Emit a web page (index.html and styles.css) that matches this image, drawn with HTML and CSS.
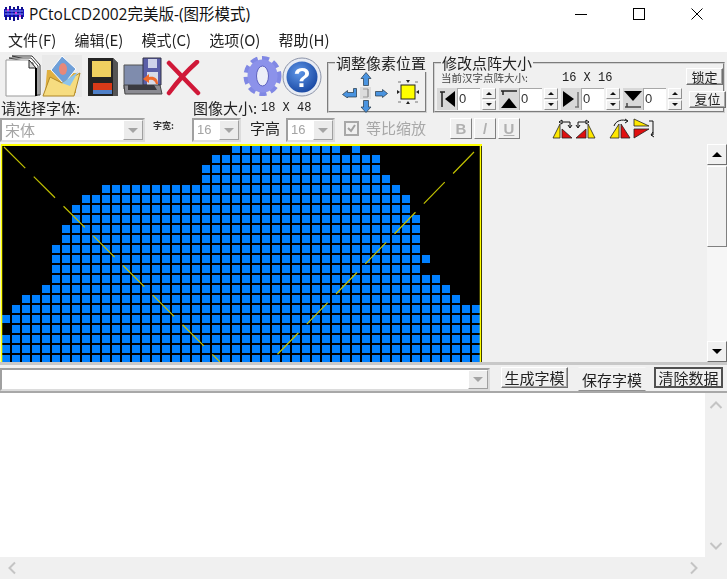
FILE: index.html
```html
<!DOCTYPE html>
<html lang="zh-CN">
<head>
<meta charset="utf-8">
<title>PCtoLCD2002</title>
<link rel="stylesheet" href="styles.css">
</head>
<body>
<div class="app">
  <header class="titlebar">
    <svg class="app-icon" width="20" height="16" viewBox="0 0 20 16">
      <rect x="0" y="3" width="20" height="8" fill="#1a1ad0"/>
      <path d="M1 1h2v13h-2zM5 0h2v14h-2zM9 1h2v14h-2zM13 0h2v14h-2zM17 1h2v12h-2z" fill="#10108c"/>
      <path d="M1 5h18M1 8h18" stroke="#8f9cff" stroke-width="1"/>
      <path d="M3 3h2v2h-2zM11 6h2v2h-2zM15 9h2v2h-2z" fill="#e040e0"/>
    </svg>
    <span class="title-text">PCtoLCD2002完美版-(图形模式)</span>
    <div class="win-controls">
      <svg width="12" height="12" viewBox="0 0 12 12"><path d="M0 6.500h12" stroke="#000"/></svg>
      <svg width="12" height="12" viewBox="0 0 12 12"><rect x=".5" y=".5" width="11" height="11" fill="none" stroke="#000"/></svg>
      <svg width="12" height="12" viewBox="0 0 12 12"><path d="M.5.5l11 11M11.500.5l-11 11" stroke="#000"/></svg>
    </div>
  </header>

  <nav class="menubar">
    <span>文件(F)</span><span>编辑(E)</span><span>模式(C)</span><span>选项(O)</span><span>帮助(H)</span>
  </nav>

  <section class="toolbar">
    <div class="toolbar-top">
      <div class="tool-left">
        <div class="icons">
          <svg class="ic-new" width="37" height="42" viewBox="0 0 37 42">
            <path d="M7 1h20l8 9v30h-6V6z" fill="#fff" stroke="#333"/>
            <path d="M4 3h22l7 8v29h-5V8z" fill="#fff" stroke="#444"/>
            <path d="M1 5h23l7 8v28H1z" fill="#fff" stroke="#999"/>
            <path d="M24 5l7 8h-7z" fill="#ddd" stroke="#222"/>
            <path d="M31 13v28" stroke="#000" stroke-width="2"/>
          </svg>
          <svg class="ic-open" width="40" height="42" viewBox="0 0 40 42">
            <rect x="0" y="0" width="40" height="42" fill="#e9e9e9"/>
            <path d="M5 15h10l3 3h16v20H3z" fill="#e0b040"/>
            <path d="M20 1l14 13-12 15-13-14z" fill="#6f9fd8" stroke="#fff"/>
            <ellipse cx="21" cy="14" rx="4" ry="6" fill="#e88878"/>
            <path d="M8 22l12 6 18-10-6 23H1z" fill="#f6dc80" stroke="#b08828"/>
            <path d="M20 28l16-11-8 14z" fill="#8cc4ec"/>
          </svg>
          <svg class="ic-save" width="32" height="40" viewBox="0 0 32 40">
            <path d="M1 1h25l5 5v33H1z" fill="#242424"/>
            <path d="M26 1l5 5v33h-5z" fill="#555"/>
            <rect x="5" y="4" width="19" height="16" fill="#f0d060"/>
            <rect x="6" y="26" width="19" height="7" fill="#d83a18"/>
            <rect x="6" y="33" width="19" height="4" fill="#4f80c8"/>
          </svg>
          <svg class="ic-saveas" width="40" height="40" viewBox="0 0 40 40">
            <path d="M1 8h20v24H1z" fill="#7f8cad" stroke="#555"/>
            <path d="M20 1h18v27H20z" fill="#5b5fa8" stroke="#334"/>
            <rect x="25" y="2" width="9" height="9" fill="#cfd3ea"/>
            <rect x="24" y="15" width="11" height="13" fill="#d8dbe8"/>
            <path d="M1 28h36l2 9H2z" fill="#8b8b92" stroke="#444"/>
            <path d="M5 28h26l3 5H5z" fill="#3a3a40"/>
            <path d="M35 27c0-6-4-8-9-7v-3l-6 5 6 4v-3c4-1 6 1 7 4z" fill="#f06a2c"/>
          </svg>
          <svg class="ic-del" width="36" height="36" viewBox="0 0 36 36">
            <path d="M3 3l29 30M31 2C22 10 11 22 3 33" fill="none" stroke="#d01838" stroke-width="4.500" stroke-linecap="round"/>
          </svg>
          <svg class="ic-gear" width="39" height="40" viewBox="0 0 39 40">
            <ellipse cx="19.500" cy="20" rx="16.500" ry="17.500" fill="none" stroke="#8088e4" stroke-width="5" stroke-dasharray="7 4.300"/>
            <ellipse cx="19.500" cy="20" rx="15" ry="16.500" fill="#8c92ea"/>
            <ellipse cx="19.500" cy="20" rx="6" ry="10" fill="#eceef8" stroke="#5f63c0"/>
          </svg>
          <svg class="ic-help" width="40" height="40" viewBox="0 0 40 40">
            <defs><radialGradient id="hb" cx=".4" cy=".35" r=".75"><stop offset="0" stop-color="#5f97e8"/><stop offset="1" stop-color="#12409c"/></radialGradient></defs>
            <circle cx="20" cy="20" r="19" fill="#e8ecf4" stroke="#8b93a8"/>
            <circle cx="20" cy="20" r="15.500" fill="url(#hb)"/>
            <text x="20" y="30" text-anchor="middle" class="help-q">?</text>
          </svg>
        </div>
        <div class="labels">
          <span class="lb-font">请选择字体:</span>
          <span class="lb-img">图像大小:</span>
          <span class="mono">18 X 48</span>
        </div>
      </div>

      <fieldset class="fs fs-pos">
        <legend>调整像素位置</legend>
        <div class="pos-body">
          <div class="pos-pad">
            <svg class="pad-up" width="12" height="14" viewBox="0 0 12 14"><path d="M6 .5l5 6H8.500v7h-5v-7H1z" fill="#4a94e0" stroke="#234" stroke-width=".7"/></svg>
            <svg class="pad-left" width="15" height="10" viewBox="0 0 15 10"><path d="M.5 6.500l5-4v2h6V.5h3V9h-9v1z" fill="#4a94e0" stroke="#234" stroke-width=".7"/></svg>
            <svg class="pad-mid" width="11" height="12" viewBox="0 0 11 12"><rect width="11" height="12" fill="#dcdcdc"/><path d="M3 2h5v8H3M8 2v8" fill="none" stroke="#999"/></svg>
            <svg class="pad-right" width="13" height="10" viewBox="0 0 13 10"><path d="M12.500 5.500l-5-4v2H.5V8h7v1.500z" fill="#4a94e0" stroke="#234" stroke-width=".7"/></svg>
            <svg class="pad-down" width="12" height="13" viewBox="0 0 12 13"><path d="M6 12.500L1 7h2.500V.5h5V7H11z" fill="#4a94e0" stroke="#234" stroke-width=".7"/></svg>
          </div>
          <svg class="pos-fit" width="22" height="24" viewBox="0 0 22 24">
            <rect x="4" y="5" width="14" height="14" fill="#ffff00" stroke="#222"/>
            <path d="M9 0h4l-2 3zM9 24h4l-2-3zM0 10v4l3-2zM22 10v4l-3-2z" fill="#222"/>
            <path d="M1 2h3M18 2h3M1 22h3M18 22h3" stroke="#777"/>
          </svg>
        </div>
      </fieldset>

      <fieldset class="fs fs-size">
        <legend>修改点阵大小</legend>
        <div class="size-head">
          <span class="size-note">当前汉字点阵大小:</span>
          <span class="mono size-val">16 X 16</span>
          <button class="btn btn-lock" type="button">锁定</button>
        </div>
        <div class="size-row">
          <svg class="sp-ic" width="20" height="22" viewBox="0 0 20 22"><rect width="20" height="22" fill="#d8d8d8"/><path d="M3 4h5M5 4v15" stroke="#222" stroke-width="1.500" fill="none"/><path d="M18 3v16L8 11z" fill="#000"/></svg>
          <span class="sp-input">0</span>
          <span class="spin"><i class="up"></i><i class="down"></i></span>
          <svg class="sp-ic" width="20" height="22" viewBox="0 0 20 22"><rect width="20" height="22" fill="#d8d8d8"/><path d="M2 3h16M4 3v4" stroke="#222" stroke-width="1.500" fill="none"/><path d="M2 20h16l-8-10z" fill="#000"/></svg>
          <span class="sp-input">0</span>
          <span class="spin"><i class="up"></i><i class="down"></i></span>
          <svg class="sp-ic" width="20" height="22" viewBox="0 0 20 22"><rect width="20" height="22" fill="#d8d8d8"/><path d="M2 3v16l11-8z" fill="#000"/><path d="M17 4v15M14 19h4" stroke="#777" stroke-width="1.500" fill="none"/></svg>
          <span class="sp-input">0</span>
          <span class="spin"><i class="up"></i><i class="down"></i></span>
          <svg class="sp-ic" width="20" height="22" viewBox="0 0 20 22"><rect width="20" height="22" fill="#d8d8d8"/><path d="M1 3h18l-9 10z" fill="#000"/><path d="M2 19h16M4 15v4" stroke="#444" stroke-width="1.500" fill="none"/></svg>
          <span class="sp-input">0</span>
          <span class="spin"><i class="up"></i><i class="down"></i></span>
          <button class="btn btn-reset" type="button">复位</button>
        </div>
      </fieldset>
    </div>

    <div class="toolbar-ctl">
      <div class="combo combo-font"><span class="combo-text">宋体</span><span class="combo-btn"></span></div>
      <span class="lb-small">字宽:</span>
      <div class="combo combo-num"><span class="combo-text">16</span><span class="combo-btn"></span></div>
      <span class="lb-high">字高</span>
      <div class="combo combo-num"><span class="combo-text">16</span><span class="combo-btn"></span></div>
      <label class="check">
        <svg width="15" height="15" viewBox="0 0 15 15"><rect x="1" y="1" width="13" height="13" fill="#f0f0f0" stroke="#a8a8a8" stroke-width="2"/><path d="M4 7l3 3 4-6" fill="none" stroke="#a0a0a0" stroke-width="2"/></svg>
        <span>等比缩放</span>
      </label>
      <div class="fmt">
        <span class="fmt-btn fmt-b">B</span><span class="fmt-btn fmt-i">/</span><span class="fmt-btn fmt-u">U</span>
      </div>
      <div class="rot rot-a">
        <svg width="21" height="21" viewBox="0 0 21 21"><path d="M1 20L8 6v14z" fill="#ffe800" stroke="#222" stroke-width=".8"/><path d="M10 20V11l10 9z" fill="#e01010" stroke="#222" stroke-width=".8"/><path d="M10 4h8v5M16 7l2 3 2-3M10 2v4l-3-2z" fill="none" stroke="#111"/></svg>
        <svg width="22" height="21" viewBox="0 0 22 21"><path d="M21 20L14 6v14z" fill="#ffe800" stroke="#222" stroke-width=".8"/><path d="M12 20V11L2 20z" fill="#e01010" stroke="#222" stroke-width=".8"/><path d="M12 4H4v5M2 7l2 3 2-3M12 2v4l3-2z" fill="none" stroke="#111"/></svg>
      </div>
      <div class="rot rot-b">
        <svg width="23" height="21" viewBox="0 0 23 21"><path d="M1 20L10 6v14z" fill="#ffe800" stroke="#222" stroke-width=".8"/><path d="M12 20V6l9 14z" fill="#e01010" stroke="#222" stroke-width=".8"/><path d="M5 8C7 2 14 1 18 3M16 1l3 2-3 2" fill="none" stroke="#111"/></svg>
        <svg width="23" height="21" viewBox="0 0 23 21"><path d="M1 1l15 7H1z" fill="#ffe800" stroke="#222" stroke-width=".8"/><path d="M1 11h15L1 20z" fill="#e01010" stroke="#222" stroke-width=".8"/><path d="M16 3h4v14h-2M20 14l-2 3 3 2" fill="none" stroke="#111"/></svg>
      </div>
    </div>
  </section>

  <main class="workspace">
    <svg class="canvas" width="482" height="218" viewBox="0 144 482 218">
      <defs>
        <pattern id="dots" patternUnits="userSpaceOnUse" x="2" y="145" width="10" height="10">
          <rect width="8" height="8" fill="#0080ff"/>
        </pattern>
      </defs>
      <rect x="1" y="144" width="481" height="218" fill="#000"/>
      <g fill="url(#dots)">
        <rect x="232" y="145" width="108" height="8"/><rect x="352" y="145" width="8" height="8"/>
        <rect x="212" y="155" width="168" height="8"/>
        <rect x="202" y="165" width="178" height="8"/>
        <rect x="202" y="175" width="188" height="8"/>
        <rect x="102" y="185" width="298" height="8"/>
        <rect x="82" y="195" width="328" height="8"/>
        <rect x="72" y="205" width="338" height="8"/>
        <rect x="72" y="215" width="348" height="8"/>
        <rect x="62" y="225" width="358" height="8"/>
        <rect x="62" y="235" width="358" height="8"/>
        <rect x="52" y="245" width="368" height="8"/>
        <rect x="52" y="255" width="378" height="8"/>
        <rect x="52" y="265" width="368" height="8"/>
        <rect x="52" y="275" width="388" height="8"/>
        <rect x="42" y="285" width="408" height="8"/>
        <rect x="22" y="295" width="438" height="8"/>
        <rect x="12" y="305" width="468" height="8"/>
        <rect x="2" y="315" width="478" height="8"/>
        <rect x="12" y="325" width="468" height="8"/>
        <rect x="2" y="335" width="478" height="8"/>
        <rect x="2" y="345" width="478" height="8"/>
        <rect x="2" y="355" width="478" height="8"/>
      </g>
      <g stroke="#c0c000" stroke-width="1.200" stroke-dasharray="30 12">
        <path d="M4 147L220 362"/>
        <path d="M474 152L270 362"/>
      </g>
      <path d="M1.500 362V145H480.500V362" fill="none" stroke="#ffff00" stroke-width="1.500"/>
      <rect x="1" y="144" width="481" height="2" fill="#ffff00"/>
    </svg>
    <div class="side"></div>
    <div class="vscroll">
      <span class="sb-btn"><i class="tri-up"></i></span>
      <span class="sb-thumb"></span>
      <span class="sb-track"></span>
      <span class="sb-btn"><i class="tri-down"></i></span>
    </div>
  </main>

  <div class="cmdbar">
    <div class="combo combo-cmd"><span class="combo-text"></span><span class="combo-btn"></span></div>
    <button class="btn btn-gen" type="button">生成字模</button>
    <button class="btn btn-store" type="button">保存字模</button>
    <button class="btn btn-clear" type="button">清除数据</button>
  </div>

  <div class="memo">
    <div class="memo-row">
      <div class="memo-text"></div>
      <div class="memo-v">
        <svg width="14" height="10" viewBox="0 0 14 10"><path d="M1.500 8L7 2.500 12.500 8" fill="none" stroke="#c4c4c4" stroke-width="2"/></svg>
        <svg width="14" height="10" viewBox="0 0 14 10"><path d="M1.500 2L7 7.500 12.500 2" fill="none" stroke="#c4c4c4" stroke-width="2"/></svg>
      </div>
    </div>
    <div class="memo-h">
      <svg width="10" height="14" viewBox="0 0 10 14"><path d="M8 1.500L2.500 7 8 12.500" fill="none" stroke="#c4c4c4" stroke-width="2"/></svg>
      <svg width="10" height="14" viewBox="0 0 10 14"><path d="M2 1.500L7.500 7 2 12.500" fill="none" stroke="#c4c4c4" stroke-width="2"/></svg>
    </div>
  </div>
</div>
</body>
</html>
```
FILE: styles.css
```css
* { box-sizing: border-box; }
html, body { margin: 0; padding: 0; background: #fff; }
body { font-family: "Noto Sans CJK SC", "Noto Sans", sans-serif; color: #111; }
.app { width: 727px; height: 579px; display: flex; flex-direction: column; overflow: hidden; }

.titlebar { height: 28px; flex: none; display: flex; align-items: center; padding-left: 4px; background: #fff; }
.app-icon { flex: none; margin-right: 5px; }
.title-text { font-size: 15.500px; line-height: 20px; font-family: "Open Sans", "Noto Sans CJK SC", sans-serif; }
.win-controls { margin-left: auto; padding-right: 24px; display: flex; gap: 46px; align-items: center; }

.menubar { height: 24px; flex: none; display: flex; align-items: center; gap: 18px; padding-left: 8px; font-size: 15px; line-height: 20px; background: #fff; color: #222; filter: blur(.3px); }

.toolbar { height: 92px; flex: none; background: #f0f0f0; display: flex; flex-direction: column; filter: blur(.4px); }
.toolbar-top { height: 66px; display: flex; flex: none; }
.tool-left { width: 327px; flex: none; display: flex; flex-direction: column; }
.icons { height: 46px; display: flex; align-items: flex-start; padding-left: 5px; flex: none; }
.icons svg { flex: none; display: block; }
.ic-new { margin-top: 3px; }
.ic-open { margin-top: 3px; }
.ic-save { margin-top: 5px; margin-left: 5px; }
.ic-saveas { margin-top: 5px; margin-left: 4px; }
.ic-del { margin-top: 8px; margin-left: 3px; }
.ic-gear { margin-top: 4px; margin-left: 41px; }
.ic-help { margin-top: 5px; }
.help-q { font: 700 28px "Liberation Sans", sans-serif; fill: #fff; }
.labels { height: 20px; display: flex; align-items: center; font-size: 15px; line-height: 20px; padding-left: 1px; color: #222; }
.lb-font { width: 192px; flex: none; }
.lb-img { width: 68px; flex: none; }
.mono { font: 12px/14px "Liberation Mono", monospace; color: #222; }

.fs { margin: 2px 0 0; padding: 0; min-width: 0; height: 59px; flex: none; border: 2px groove #d0d0d0; }
.fs legend { padding: 0 1px; font-size: 15px; line-height: 18px; color: #222; white-space: nowrap; }
.fs-pos { width: 100px; }
.fs-pos legend { margin-left: 6px; }
.fs-size { width: 292px; margin-left: 6px; }
.fs-size legend { margin-left: 6px; }
.pos-body { display: flex; align-items: center; margin-top: -1px; }
.pos-pad { margin-left: 12px; flex: none; display: grid; grid-template-columns: 17px 15px 16px; grid-template-rows: 15px 14px 13px; justify-items: center; align-items: center; }
.pos-pad svg { display: block; }
.pad-up { grid-column: 2; grid-row: 1; }
.pad-left { grid-column: 1; grid-row: 2; }
.pad-mid { grid-column: 2; grid-row: 2; }
.pad-right { grid-column: 3; grid-row: 2; }
.pad-down { grid-column: 2; grid-row: 3; }
.pos-fit { margin-left: 8px; flex: none; }

.size-head { height: 17px; display: flex; align-items: center; margin-top: -4px; padding-left: 6px; }
.size-note { width: 121px; flex: none; margin-top: 2px; font-size: 10.500px; line-height: 11px; color: #444; white-space: nowrap; }
.size-val { width: 124px; flex: none; margin-top: 3px; }
.btn { padding: 0; font-family: inherit; background: #f0f0f0; color: #222; border: 1px solid; border-color: #fff #707070 #707070 #fff; box-shadow: inset -1px -1px 0 #a8a8a8; white-space: nowrap; }
.btn-lock, .btn-reset { width: 37px; height: 17px; font-size: 13px; line-height: 14px; flex: none; }
.size-row { display: flex; align-items: center; height: 22px; margin-top: 3px; padding-left: 2px; }
.sp-ic { flex: none; display: block; }
.sp-input { width: 23px; height: 22px; flex: none; background: #fff; border-top: 1px solid #a8a8a8; border-left: 1px solid #a8a8a8; font: 13px/20px "Liberation Sans", sans-serif; padding-left: 1px; color: #333; }
.spin { width: 14px; flex: none; margin: 0 3px 0 2px; display: flex; flex-direction: column; gap: 1px; }
.spin i { height: 10.500px; display: flex; align-items: center; justify-content: center; background: #f0f0f0; border: 1px solid; border-color: #fff #909090 #909090 #fff; }
.spin i::after { content: ""; border-left: 3px solid transparent; border-right: 3px solid transparent; }
.spin .up::after { border-bottom: 3px solid #111; }
.spin .down::after { border-top: 3px solid #111; }
.btn-reset { margin-left: 4px; }

.toolbar-ctl { height: 26px; flex: none; display: flex; align-items: flex-start; }
.combo { height: 24px; display: flex; background: #fff; border: 2px solid; border-color: #a0a0a0 #dcdcdc #dcdcdc #a0a0a0; flex: none; }
.combo-font { width: 145px; }
.combo-num { width: 49px; }
.combo-text { flex: 1; min-width: 0; padding-left: 3px; font-size: 15px; line-height: 20px; color: #a4a4a4; }
.combo-num .combo-text { font: 13px/20px "Liberation Sans", sans-serif; }
.combo-btn { width: 20px; flex: none; display: flex; align-items: center; justify-content: center; background: #ececec; border: 1px solid; border-color: #fff #a0a0a0 #a0a0a0 #fff; }
.combo-btn::after { content: ""; border-left: 5px solid transparent; border-right: 5px solid transparent; border-top: 5px solid #a4a4a4; }
.lb-small { width: 39px; margin-left: 8px; margin-top: 2px; font-size: 9px; font-weight: 700; line-height: 12px; color: #333; flex: none; }
.lb-high { width: 36px; margin-left: 9px; font-size: 15px; line-height: 20px; color: #222; flex: none; }
.check { margin-left: 9px; width: 84px; display: flex; align-items: center; gap: 7px; flex: none; font-size: 15px; line-height: 20px; color: #a8a8a8; }
.check svg { flex: none; }
.check span { white-space: nowrap; }
.fmt { display: flex; gap: 2px; margin-left: 22px; flex: none; }
.fmt-btn { width: 22px; height: 21px; display: flex; align-items: center; justify-content: center; font: 700 15px/18px "Liberation Sans", sans-serif; color: #b0b0b0; border: 1px solid; border-color: #fff #808080 #808080 #fff; background: #f0f0f0; }
.fmt-u { text-decoration: underline; }
.rot { display: flex; flex: none; gap: 1px; }
.rot svg { display: block; flex: none; }
.rot-a { margin-left: 32px; }
.rot-b { margin-left: 13px; }

.workspace { height: 218px; flex: none; display: flex; background: #f0f0f0; }
.canvas { display: block; flex: none; filter: blur(.4px); }
.side { flex: 1; }
.vscroll { width: 20px; flex: none; display: flex; flex-direction: column; }
.sb-btn { height: 21px; flex: none; display: flex; align-items: center; justify-content: center; background: #f0f0f0; border: 1px solid; border-color: #fff #707070 #707070 #fff; }
.sb-thumb { height: 81px; flex: none; background: #f0f0f0; border: 1px solid; border-color: #fff #808080 #808080 #fff; margin-top: 1px; }
.sb-track { flex: 1; background: #f6f6f6; }
.tri-up, .tri-down { display: block; border-left: 5px solid transparent; border-right: 5px solid transparent; }
.tri-up { border-bottom: 5px solid #000; }
.tri-down { border-top: 5px solid #000; }

.cmdbar { height: 29px; flex: none; display: flex; align-items: flex-start; background: #f0f0f0; border-top: 3px solid #c8c8c8; padding-top: 2px; filter: blur(.3px); }
.combo-cmd { width: 490px; height: 23px; margin-top: 1px; }
.btn-gen, .btn-store, .btn-clear { flex: none; font-size: 15px; line-height: 18px; }
.btn-gen { width: 67px; height: 21px; margin-left: 11px; }
.btn-store { width: 68px; height: 24px; margin-left: 10px; padding-top: 2px; border-color: #f8f8f8 #f0f0f0 #909090 #f0f0f0; box-shadow: none; }
.btn-clear { width: 69px; height: 21px; margin-left: 8px; border: 2px solid #505050; box-shadow: none; }

.memo { flex: 1; min-height: 0; display: flex; flex-direction: column; background: #f0f0f0; border-top: 2px solid #a8a8a8; }
.memo-row { flex: 1; min-height: 0; display: flex; }
.memo-text { flex: 1; background: #fff; }
.memo-v { width: 22px; flex: none; display: flex; flex-direction: column; justify-content: space-between; align-items: center; padding: 7px 0 6px; }
.memo-h { height: 22px; flex: none; display: flex; align-items: center; justify-content: space-between; padding: 0 28px 0 7px; }
```
